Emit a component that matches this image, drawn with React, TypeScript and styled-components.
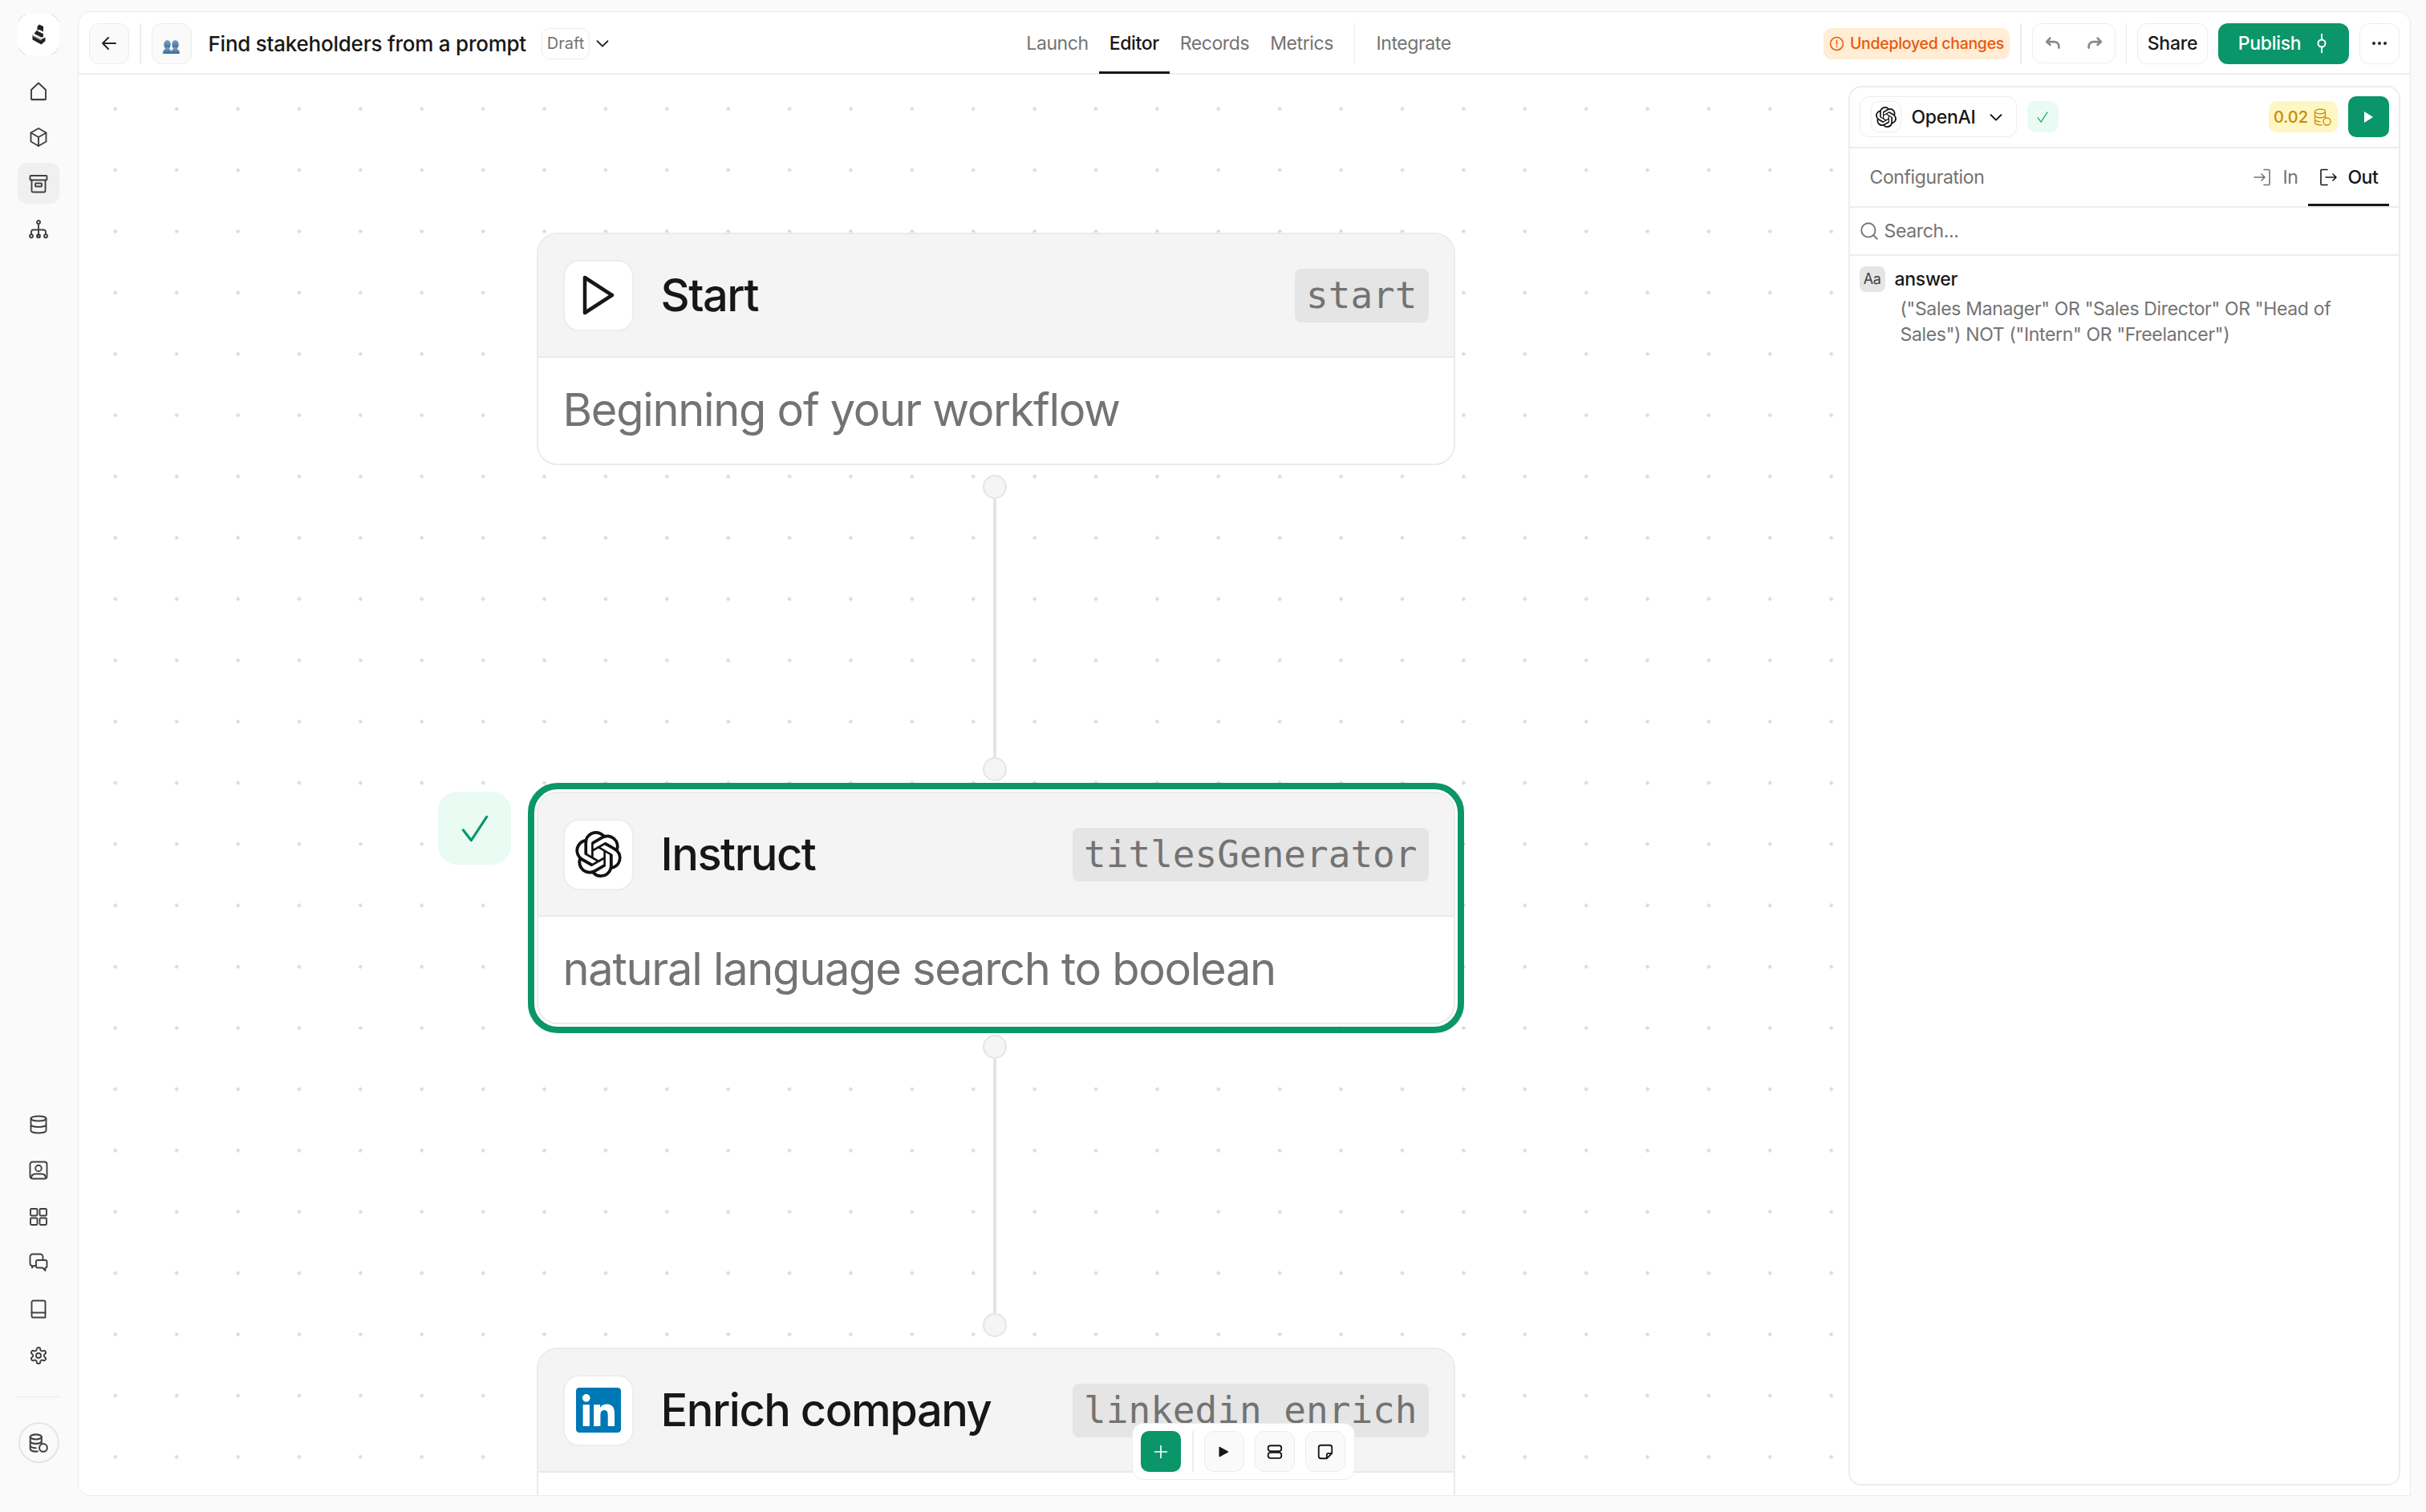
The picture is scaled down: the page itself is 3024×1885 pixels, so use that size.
import React from "react";
import styled, { createGlobalStyle } from "styled-components";
import { SiOpenai } from "react-icons/si";
import { FaLinkedin } from "react-icons/fa";

const Global = createGlobalStyle`
  html, body { margin: 0; padding: 0; background: #fafafa; }
  * { box-sizing: border-box; }
  body { font-family: Inter, "Liberation Sans", sans-serif; color: #171717; -webkit-font-smoothing: antialiased; }
  svg { flex: none; }
`;

const Shell = styled.div`
  width: 3024px; height: 1885px; display: flex; background: #fafafa; overflow: hidden;
`;
const Sidebar = styled.nav`
  width: 97px; flex: none; height: 100%; display: flex; flex-direction: column; align-items: center;
  padding: 17px 1px 61px 0;
`;
const LogoBox = styled.div`
  width: 52px; height: 52px; border-radius: 14px; background: #fff; display: flex; align-items: center; justify-content: center;
  margin-bottom: 19px; position: relative;
  &::before {
    content: ""; position: absolute; inset: 0; border: 1.5px solid #d4d4d4; border-radius: 14px;
    mask-image: linear-gradient(to right, #000 10px, transparent 10px, transparent 42px, #000 42px),
      linear-gradient(to bottom, #000 10px, transparent 10px, transparent 42px, #000 42px);
    mask-composite: intersect;
  }
`;
const NavGroup = styled.div`
  display: flex; flex-direction: column; gap: 6.6px;
`;
const NavItem = styled.div<{ $active?: boolean }>`
  width: 52px; height: 51px; border-radius: 12px; display: flex; align-items: center; justify-content: center;
  background: ${(p) => (p.$active ? "#f0f0f0" : "transparent")};
  color: #404040;
`;
const Spacer = styled.div`flex: 1;`;
const DashLine = styled.div`
  width: 52px; border-top: 1px dashed #e5e5e5; margin: 26px 0 31px;
`;
const CreditCircle = styled.div`
  width: 51px; height: 51px; border-radius: 50%; border: 2px solid #e5e5e5; display: flex; align-items: center; justify-content: center; color: #404040;
`;
const Main = styled.main`
  margin-top: 14px; width: 2908px; height: 1851px; background: #fff; border: 1.5px solid #ebebeb; border-radius: 16px 16px 0 16px;
  display: flex; flex-direction: column; overflow: hidden; flex: none;
`;
const Topbar = styled.header`
  height: 78px; flex: none; border-bottom: 2px solid #ededed; display: grid; grid-template-columns: 1fr auto 1fr; align-items: center; padding: 0 13px;
`;
const BarSide = styled.div<{ $end?: boolean }>`
  display: flex; align-items: center; justify-content: ${(p) => (p.$end ? "flex-end" : "flex-start")}; min-width: 0;
`;
const SquareBtn = styled.div<{ $bg?: string }>`
  width: 50px; height: 51px; border-radius: 12px; border: 1.5px solid #ededed; background: ${(p) => p.$bg || "#fafafa"};
  display: flex; align-items: center; justify-content: center; flex: none; color: #262626;
`;
const VSep = styled.div<{ $m: string }>`
  width: 1.5px; height: 51px; background: #ededed; margin: ${(p) => p.$m}; flex: none;
`;
const Title = styled.span`
  font-size: 26px; font-weight: 500; margin-left: 21px; white-space: nowrap; letter-spacing: -0.24px;
`;
const DraftBadge = styled.span`
  margin-left: 19px; height: 39px; width: 60px; border: 1.5px solid #ededed; border-radius: 10px; display: flex; align-items: center; justify-content: center;
  font-size: 20px; color: #737373; flex: none;
`;
const Chevron = styled.span`
  display: flex; margin-left: 5px; color: #262626;
`;
const Tabs = styled.div`
  display: flex; align-items: center; height: 78px; margin-right: 14px;
`;
const Tab = styled.div<{ $active?: boolean }>`
  height: 76px; padding: 0 13px; display: flex; align-items: center; font-size: 23px; letter-spacing: -0.4px; position: relative;
  font-weight: ${(p) => (p.$active ? 500 : 400)}; color: ${(p) => (p.$active ? "#171717" : "#737373")};
  ${(p) => p.$active && `&::after { content: ""; position: absolute; left: 0; right: 0; bottom: 0; height: 3px; background: #171717; }`}
`;
const Warn = styled.span`
  height: 39px; width: 232px; border-radius: 10px; background: #ffedd5; color: #ea580c; font-size: 19.5px; letter-spacing: -0.3px; font-weight: 500;
  display: flex; align-items: center; justify-content: center; gap: 7px; white-space: nowrap; flex: none;
`;
const UndoGroup = styled.div`
  width: 104px; height: 50px; border: 1.5px solid #ededed; border-radius: 12px; display: flex; align-items: center; justify-content: space-between; padding: 0 14px; color: #8a8a8a; flex: none;
`;
const ShareBtn = styled.div`
  width: 88px; height: 51px; border: 1.5px solid #ededed; border-radius: 12px; display: flex; align-items: center; justify-content: center; font-size: 23px; letter-spacing: -0.25px; font-weight: 500; flex: none;
`;
const PublishBtn = styled.div`
  width: 163px; height: 51px; background: #0a9669; border-radius: 12px; color: #fff; font-size: 23px; letter-spacing: -0.3px; font-weight: 500; display: flex; align-items: center; justify-content: center; gap: 14px; padding-left: 3px; margin: 0 13px; flex: none;
`;
const Canvas = styled.div`
  flex: 1; position: relative; overflow: hidden; background-color: #fff;
  background-image: radial-gradient(circle, #dcdcdc 2px, transparent 2.4px);
  background-size: 76.4px 76.4px;
  background-position: 7.6px 4.5px;
`;
const Node = styled.div<{ $top: number; $selected?: boolean }>`
  position: absolute; left: 570.5px; top: ${(p) => p.$top}px; width: 1145px; height: 290px; background: #fff;
  border: 2.5px solid #ebebeb; border-radius: 26px; display: flex; flex-direction: column;
  ${(p) => p.$selected && `outline: 8px solid #0a9669; outline-offset: 3.5px;`}
`;
const NodeHead = styled.div`
  height: 154px; flex: none; background: #f4f4f4; border-bottom: 2.5px solid #e9e9e9; border-radius: 24px 24px 0 0; display: flex; align-items: center;
  padding: 0 31px 0 31px;
`;
const NodeIcon = styled.div`
  width: 88px; height: 89px; background: #fff; border: 2px solid #ededed; border-radius: 20px; display: flex; align-items: center; justify-content: center; flex: none; color: #171717;
`;
const NodeTitle = styled.span`
  font-size: 56px; font-weight: 500; margin-left: 34px; flex: 1; white-space: nowrap; letter-spacing: -1.5px;
`;
const NodeTag = styled.span`
  height: 67px; padding: 0 14px; background: #e5e5e5; border-radius: 8px; display: flex; align-items: center;
  font-family: "DejaVu Sans Mono", monospace; font-size: 46px; color: #737373; white-space: nowrap;
`;
const NodeDesc = styled.div`
  flex: 1; display: flex; align-items: center; padding: 0 31px 2px; font-size: 56px; color: #737373; white-space: nowrap; letter-spacing: -1.3px;
`;
const Handle = styled.div<{ $top: number }>`
  position: absolute; left: 1127px; top: ${(p) => p.$top}px; width: 30px; height: 30px; border-radius: 50%; background: #f5f5f5; border: 2px solid #e5e5e5;
`;
const Edge = styled.div<{ $top: number; $h: number }>`
  position: absolute; left: 1140px; top: ${(p) => p.$top}px; height: ${(p) => p.$h}px; width: 4px; background: #e5e5e5;
`;
const StatusBadge = styled.div`
  position: absolute; left: 448px; top: 894px; width: 91px; height: 91px; border-radius: 24px; background: #e9fbf3; display: flex; align-items: center; justify-content: center; color: #0a9669;
`;
const Dock = styled.div`
  position: absolute; left: 1313px; top: 1681px; width: 278px; height: 71px; border-radius: 14px; background: #fff; border: 1.5px solid #ededed; display: flex; align-items: center; padding: 0 10px;
`;
const DockAdd = styled.div`
  width: 50px; height: 51px; border-radius: 10px; background: #0a9669; color: #fff; display: flex; align-items: center; justify-content: center; flex: none;
`;
const DockBtn = styled(SquareBtn)`
  margin-left: 13px; color: #171717;
`;
const DockSep = styled.div`
  width: 1.5px; height: 51px; background: #ededed; margin: 0 0 0 14px; flex: none;
`;
const Inspector = styled.aside`
  position: absolute; left: 2205.5px; top: 13.5px; width: 688px; height: 1745px; background: #fff; border: 2px solid #ededed; border-radius: 16px; display: flex; flex-direction: column;
`;
const InspectorHead = styled.div`
  height: 76px; flex: none; border-bottom: 2px solid #ededed; display: flex; align-items: center; padding: 0 12px 0 12px;
`;
const ModelSelect = styled.div`
  width: 196px; height: 51px; border: 1.5px solid #ededed; border-radius: 12px; display: flex; align-items: center; padding: 0 0 0 13px; flex: none;
`;
const ModelIcon = styled.div`
  width: 38px; height: 39px; border: 1.5px solid #ededed; border-radius: 10px; display: flex; align-items: center; justify-content: center; flex: none;
`;
const ModelName = styled.span`
  font-size: 23px; letter-spacing: -0.3px; font-weight: 500; margin-left: 13px; width: 94px;
`;
const OkBadge = styled.div`
  width: 39px; height: 39px; border-radius: 10px; background: #e9fbf3; color: #0a9669; margin-left: 13px; display: flex; align-items: center; justify-content: center; flex: none;
`;
const CostBadge = styled.div`
  margin-left: auto; width: 86px; height: 39px; border-radius: 10px; background: #fef6c3; color: #ca8a04; font-size: 20px; font-weight: 500; display: flex; align-items: center; justify-content: center; gap: 6px; flex: none;
`;
const RunBtn = styled.div`
  margin-left: 13px; width: 51px; height: 51px; border-radius: 10px; background: #0a9669; color: #fff; display: flex; align-items: center; justify-content: center; flex: none;
`;
const InspectorTabs = styled.div`
  height: 74px; flex: none; border-bottom: 2px solid #ededed; display: flex; align-items: center; padding: 0 12px 0 25px;
`;
const ConfigTab = styled.span`
  font-size: 23px; letter-spacing: -0.4px; color: #737373; flex: 1;
`;
const IOTab = styled.div<{ $active?: boolean }>`
  height: 72px; display: flex; align-items: center; gap: 12px; font-size: 23px; letter-spacing: -0.4px; position: relative; padding: 0 13px;
  font-weight: ${(p) => (p.$active ? 500 : 400)}; color: ${(p) => (p.$active ? "#171717" : "#737373")};
  ${(p) => p.$active && `&::after { content: ""; position: absolute; left: 0; right: 0; bottom: 0; height: 3px; background: #171717; }`}
`;
const SearchRow = styled.div`
  height: 60px; flex: none; border-bottom: 2px solid #ededed; display: flex; align-items: center; gap: 6px; padding: 0 11px; color: #737373; font-size: 23px; letter-spacing: -0.35px;
`;
const Output = styled.div`
  padding: 13px 12px;
`;
const OutputHead = styled.div`
  display: flex; align-items: center; gap: 12px;
`;
const TypeChip = styled.div`
  width: 32px; height: 32px; border-radius: 8px; background: #e5e5e5; color: #404040; font-size: 18px; display: flex; align-items: center; justify-content: center; letter-spacing: -0.5px;
`;
const OutputName = styled.span`
  font-size: 23px; letter-spacing: -0.3px; font-weight: 500;
`;
const OutputValue = styled.div`
  margin: 5px 0 0 51px; width: 600px; font-size: 23px; line-height: 32px; color: #737373; letter-spacing: -0.33px;
`;

type IP = { s?: number; w?: number };
const Svg = ({ s = 24, w = 1.9, children }: IP & { children: React.ReactNode }) => (
  <svg width={s} height={s} viewBox="0 0 24 24" fill="none" stroke="currentColor" strokeWidth={w} strokeLinecap="round" strokeLinejoin="round">
    {children}
  </svg>
);

const Logo = () => (
  <svg width="17" height="26" viewBox="0 0 17 26" fill="#222">
    <path d="M9 .5l5 2.500v6.500L9 7 6.500 8V3z" />
    <path d="M5.500 8l8.500 4.300v3.400l-2.200 1.100L2.500 12z" />
    <path d="M.5 13.500l11.200 5.500 4.800-2.500v4.500l-5 4.500-11-6z" />
    <path d="M1 14.500l10.500 5.500" stroke="#fff" strokeWidth=".9" />
  </svg>
);
const PeopleWrap = styled.span`
  display: flex; margin-top: 8px;
`;
const People = () => (
  <PeopleWrap>
    <svg width="21" height="17" viewBox="0 0 21 17">
      <defs>
        <linearGradient id="pg" x1="0" y1="0" x2="0" y2="1">
          <stop offset="0" stopColor="#7fa3c4" />
          <stop offset="1" stopColor="#34689a" />
        </linearGradient>
      </defs>
      <g fill="url(#pg)">
        <ellipse cx="5.500" cy="5.500" rx="4.200" ry="5.500" />
        <path d="M3.500 9C3.500 12 0 12 0 16q0 1 1 1h9q1 0 1-1c0-4-3.500-4-3.500-7z" />
        <ellipse cx="15.500" cy="5.500" rx="4.200" ry="5.500" />
        <path d="M13.500 9c0 3-3.500 3-3.500 7q0 1 1 1h9q1 0 1-1c0-4-3.500-4-3.500-7z" />
      </g>
    </svg>
  </PeopleWrap>
);

const HomeI = () => <Svg><path d="M12 1.500l9 8.500v11.300a1 1 0 0 1-1 1H4a1 1 0 0 1-1-1V10z" /><path d="M3.500 22h17" /></Svg>;
const CubeI = () => <Svg><path d="M12 1l9.500 5.500v11L12 23l-9.500-5.500v-11z" /><path d="M2.500 6.500L12 12l9.500-5.500M12 12v11" /></Svg>;
const ArchiveI = () => <Svg><rect x="1.500" y="2" width="21" height="5.500" rx="1" /><path d="M3.500 7.500V21a1.500 1.500 0 0 0 1.500 1.500h14a1.500 1.500 0 0 0 1.500-1.500V7.500" /><rect x="8" y="11.500" width="8" height="4" rx=".8" /></Svg>;
const OrgI = () => <Svg><circle cx="12" cy="3" r="2" /><path d="M12 5v15M3 18v-3a2.500 2.500 0 0 1 2.500-2.500h13A2.500 2.500 0 0 1 21 15v3" /><circle cx="3" cy="20.300" r="2" /><circle cx="12" cy="20.300" r="2" /><circle cx="21" cy="20.300" r="2" /></Svg>;
const DbI = () => <Svg><ellipse cx="12" cy="4.500" rx="9.500" ry="3" /><path d="M2.500 4.500v15c0 1.700 4.300 3 9.500 3s9.500-1.300 9.500-3v-15M2.500 12c0 1.700 4.300 3 9.500 3s9.500-1.300 9.500-3" /></Svg>;
const ContactI = () => <Svg><rect x="1.500" y="1.500" width="21" height="21" rx="3" /><circle cx="12" cy="9.500" r="3.800" /><path d="M3 22c0-3.800 2.500-5.500 5.500-5.500h7c3 0 5.500 1.700 5.500 5.500" /></Svg>;
const GridI = () => <Svg><rect x="2" y="2" width="8.500" height="8.500" rx="1.200" /><rect x="13.500" y="2" width="8.500" height="8.500" rx="1.200" /><rect x="2" y="13.500" width="8.500" height="8.500" rx="1.200" /><rect x="13.500" y="13.500" width="8.500" height="8.500" rx="1.200" /></Svg>;
const ChatI = () => <Svg><path d="M8.500 16H6l-2 2.500V16a3 3 0 0 1-2.500-3V5A3.500 3.500 0 0 1 5 1.500h9A3.500 3.500 0 0 1 17.500 5v3" /><path d="M11 9h9.500a2 2 0 0 1 2 2v5.500a2 2 0 0 1-2 2V22L17 18.500h-6a2 2 0 0 1-2-2V11a2 2 0 0 1 2-2z" /></Svg>;
const BookI = () => <Svg><path d="M5.500 1.500h13a2 2 0 0 1 2 2v19H5.500a2 2 0 0 1-2-2v-17a2 2 0 0 1 2-2z" /><path d="M3.500 16.500h17" /></Svg>;
const GearI = () => <Svg><circle cx="12" cy="12" r="3" /><path d="M12.220 2h-.44a2 2 0 0 0-2 2v.18a2 2 0 0 1-1 1.730l-.43.250a2 2 0 0 1-2 0l-.150-.080a2 2 0 0 0-2.730.730l-.220.380a2 2 0 0 0 .730 2.730l.150.100a2 2 0 0 1 1 1.720v.510a2 2 0 0 1-1 1.740l-.150.090a2 2 0 0 0-.730 2.730l.220.380a2 2 0 0 0 2.730.730l.150-.080a2 2 0 0 1 2 0l.430.250a2 2 0 0 1 1 1.730V20a2 2 0 0 0 2 2h.440a2 2 0 0 0 2-2v-.18a2 2 0 0 1 1-1.730l.430-.250a2 2 0 0 1 2 0l.150.080a2 2 0 0 0 2.730-.730l.220-.390a2 2 0 0 0-.730-2.730l-.150-.080a2 2 0 0 1-1-1.740v-.500a2 2 0 0 1 1-1.740l.150-.090a2 2 0 0 0 .730-2.730l-.220-.380a2 2 0 0 0-2.730-.730l-.150.080a2 2 0 0 1-2 0l-.430-.250a2 2 0 0 1-1-1.730V4a2 2 0 0 0-2-2z" /></Svg>;
const CreditsI = ({ s = 26, w = 1.9 }: IP) => <Svg s={s} w={w}><ellipse cx="9" cy="5" rx="6.500" ry="2.800" /><path d="M2.500 5v14c0 1.500 2.900 2.800 6.500 2.800.8 0 1.500 0 2-.2M2.500 10c0 1.500 2.900 2.800 6.500 2.800s6.500-1.300 6.500-2.800M2.500 15c0 1.500 2.900 2.800 6.500 2.800M15.500 5v7" /><circle cx="17.500" cy="17.500" r="4.500" /></Svg>;

const Chev = ({ s = 22 }: IP) => <Svg s={s} w={2.1}><path d="M5 9l7 7 7-7" /></Svg>;
const Check = ({ s = 20, w = 1.6 }: IP) => <Svg s={s} w={w}><path d="M4 13l5.500 7L20 4" /></Svg>;

const RAIL_TOP = [<HomeI key="h" />, <CubeI key="c" />, <ArchiveI key="a" />, <OrgI key="o" />];
const RAIL_BOTTOM = [<DbI key="d" />, <ContactI key="u" />, <GridI key="g" />, <ChatI key="m" />, <BookI key="b" />, <GearI key="s" />];

export default function App() {
  return (
    <Shell>
      <Global />
      <Sidebar>
        <LogoBox><Logo /></LogoBox>
        <NavGroup>
          {RAIL_TOP.map((ic, i) => <NavItem key={i} $active={i === 2}>{ic}</NavItem>)}
        </NavGroup>
        <Spacer />
        <NavGroup>
          {RAIL_BOTTOM.map((ic, i) => <NavItem key={i}>{ic}</NavItem>)}
        </NavGroup>
        <DashLine />
        <CreditCircle><CreditsI /></CreditCircle>
      </Sidebar>
      <Main>
        <Topbar>
          <BarSide>
            <SquareBtn>
              <Svg s={24} w={2}><path d="M20 12H4M11 5l-7 7 7 7" /></Svg>
            </SquareBtn>
            <VSep $m="0 13px" />
            <SquareBtn><People /></SquareBtn>
            <Title>Find stakeholders from a prompt</Title>
            <DraftBadge>Draft</DraftBadge>
            <Chevron><Chev /></Chevron>
          </BarSide>
          <Tabs>
            <Tab>Launch</Tab>
            <Tab $active>Editor</Tab>
            <Tab>Records</Tab>
            <Tab>Metrics</Tab>
            <VSep $m="0 13px" />
            <Tab>Integrate</Tab>
          </Tabs>
          <BarSide $end>
            <Warn>
              <Svg s={19} w={1.9}><circle cx="12" cy="12" r="10" /><path d="M12 7v6M12 16.500v.1" /></Svg>
              Undeployed changes
            </Warn>
            <VSep $m="0 13px" />
            <UndoGroup>
              <Svg s={22} w={3}><path d="M8 5L3.500 10 8 14M4 10h10a6 6 0 0 1 6 6v2" /></Svg>
              <Svg s={22} w={3}><path d="M16 5l4.500 5-4.500 4M20 10H10a6 6 0 0 0-6 6v2" /></Svg>
            </UndoGroup>
            <VSep $m="0 13px" />
            <ShareBtn>Share</ShareBtn>
            <PublishBtn>
              Publish
              <Svg s={24} w={2}><circle cx="12" cy="12" r="4.500" /><path d="M12 .5v7M12 16.500v7" /></Svg>
            </PublishBtn>
            <SquareBtn $bg="#fff">
              <svg width="20" height="6" viewBox="0 0 20 6" fill="#262626"><circle cx="3" cy="3" r="2" /><circle cx="10" cy="3" r="2" /><circle cx="17" cy="3" r="2" /></svg>
            </SquareBtn>
          </BarSide>
        </Topbar>
        <Canvas>
          <Node $top={197}>
            <NodeHead>
              <NodeIcon>
                <svg width="44" height="52" viewBox="0 0 44 52" fill="none" stroke="#171717" strokeWidth="4.500" strokeLinejoin="round"><path d="M5 4l34 22L5 48z" /></svg>
              </NodeIcon>
              <NodeTitle>Start</NodeTitle>
              <NodeTag>start</NodeTag>
            </NodeHead>
            <NodeDesc>Beginning of your workflow</NodeDesc>
          </Node>
          <Handle $top={499} />
          <Edge $top={529} $h={322} />
          <Handle $top={851} />
          <StatusBadge><Check s={44} w={1.7} /></StatusBadge>
          <Node $top={894} $selected>
            <NodeHead>
              <NodeIcon><SiOpenai size={58} color="#111" /></NodeIcon>
              <NodeTitle>Instruct</NodeTitle>
              <NodeTag>titlesGenerator</NodeTag>
            </NodeHead>
            <NodeDesc>natural language search to boolean</NodeDesc>
          </Node>
          <Handle $top={1197} />
          <Edge $top={1227} $h={317} />
          <Handle $top={1544} />
          <Node $top={1587}>
            <NodeHead>
              <NodeIcon><FaLinkedin size={64} color="#0077b5" /></NodeIcon>
              <NodeTitle>Enrich company</NodeTitle>
              <NodeTag>linkedin_enrich</NodeTag>
            </NodeHead>
          </Node>
          <Dock>
            <DockAdd><Svg s={20} w={2}><path d="M12 3v18M3 12h18" /></Svg></DockAdd>
            <DockSep />
            <DockBtn>
              <svg width="13" height="14" viewBox="0 0 13 14" fill="#171717"><path d="M1 1v12l11-6z" stroke="#171717" strokeLinejoin="round" /></svg>
            </DockBtn>
            <DockBtn>
              <Svg s={22} w={2}><rect x="3" y="3.500" width="18" height="7.500" rx="3" /><rect x="3" y="13" width="18" height="7.500" rx="3" /></Svg>
            </DockBtn>
            <DockBtn>
              <Svg s={22} w={2}><path d="M14 21H6a3 3 0 0 1-3-3V6a3 3 0 0 1 3-3h12a3 3 0 0 1 3 3v8zM21 14h-5a2 2 0 0 0-2 2v5" /></Svg>
            </DockBtn>
          </Dock>
          <Inspector>
            <InspectorHead>
              <ModelSelect>
                <ModelIcon><SiOpenai size={26} color="#111" /></ModelIcon>
                <ModelName>OpenAI</ModelName>
                <Chev />
              </ModelSelect>
              <OkBadge><Check s={18} /></OkBadge>
              <CostBadge>
                0.02
                <CreditsI s={24} w={1.3} />
              </CostBadge>
              <RunBtn>
                <svg width="14" height="16" viewBox="0 0 14 16" fill="#fff"><path d="M2 1l11 7-11 7z" /></svg>
              </RunBtn>
            </InspectorHead>
            <InspectorTabs>
              <ConfigTab>Configuration</ConfigTab>
              <IOTab>
                <Svg s={24} w={1.6}><path d="M13 2.500h6a1 1 0 0 1 1 1v17a1 1 0 0 1-1 1h-6M1 12h13M10 8l4 4-4 4" /></Svg>
                In
              </IOTab>
              <IOTab $active>
                <Svg s={24} w={1.6}><path d="M11 2.500H4a1 1 0 0 0-1 1v17a1 1 0 0 0 1 1h7M9 12h13M18 8l4 4-4 4" /></Svg>
                Out
              </IOTab>
            </InspectorTabs>
            <SearchRow>
              <Svg s={26} w={1.7}><circle cx="11" cy="11" r="8" /><path d="M21 21l-4.300-4.300" /></Svg>
              Search...
            </SearchRow>
            <Output>
              <OutputHead>
                <TypeChip>Aa</TypeChip>
                <OutputName>answer</OutputName>
              </OutputHead>
              <OutputValue>("Sales Manager" OR "Sales Director" OR "Head of Sales") NOT ("Intern" OR "Freelancer")</OutputValue>
            </Output>
          </Inspector>
        </Canvas>
      </Main>
    </Shell>
  );
}
